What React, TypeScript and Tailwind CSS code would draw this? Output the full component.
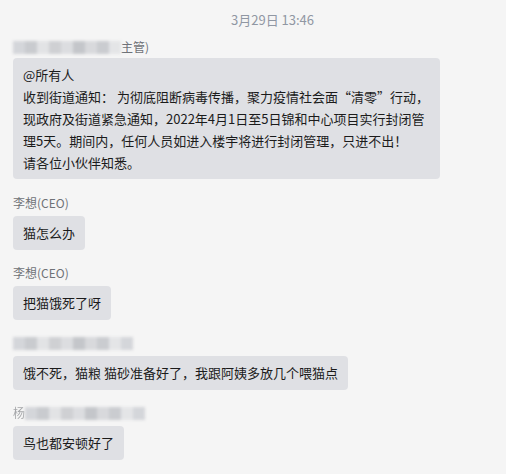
const font = { fontFamily: '"Noto Sans CJK SC", "Noto Sans", sans-serif' };

const shades = ["#d4d6da", "#c9cbcf", "#e2e3e5", "#cfd0d3", "#dcdde0", "#c4c6ca", "#d8d9dc", "#caccd0", "#e4e5e7"];

function Blurred({ width, lead, tail }: { width: number; lead?: string; tail?: string }) {
  const n = Math.round(width / 12);
  return (
    <div className="flex h-[18px] items-center text-[12px] leading-[18px] text-[#6f7277]">
      {lead && <span className="opacity-60 blur-[0.6px]">{lead}</span>}
      <div className="flex h-[13px] blur-[1.8px]">
        {Array.from({ length: n }).map((_, i) => (
          <div key={i} className="h-full w-[12px]" style={{ background: shades[i % shades.length] }} />
        ))}
      </div>
      {tail && <span>{tail}</span>}
    </div>
  );
}

function Name({ children }: { children: React.ReactNode }) {
  return <div className="h-[18px] text-[12px] leading-[18px] text-[#6f7277]">{children}</div>;
}

function Bubble({ children }: { children: React.ReactNode }) {
  return (
    <div className="mt-[4px] w-fit rounded-[4px] bg-[#dfe0e4] px-[10px] py-[6px] text-[13px] leading-[22px] text-[#1b1b1b]">
      {children}
    </div>
  );
}

export default function App() {
  return (
    <div className="h-[474px] w-[506px] overflow-hidden bg-[#f5f5f5] pl-[13px]" style={font}>
      <div className="flex justify-center pl-[26px] pt-[10px] text-[13px] leading-[20px] text-[#9097a3]">3月29日 13:46</div>
      <div className="mt-[8px]">
        <Blurred width={112} tail="主管)" />
      </div>
      <div className="mt-[2px] w-[427px] whitespace-nowrap rounded-[4px] bg-[#dfe0e4] px-[10px] py-[5.5px] text-[13px] leading-[22px] text-[#1b1b1b]">
        @所有人
        <br />
        收到街道通知： 为彻底阻断病毒传播，聚力疫情社会面“清零”行动，
        <br />
        现政府及街道紧急通知，2022年4月1日至5日锦和中心项目实行封闭管
        <br />
        理5天。期间内，任何人员如进入楼宇将进行封闭管理，只进不出！
        <br />
        请各位小伙伴知悉。
      </div>
      <div className="mt-[15px]">
        <Name>李想(CEO)</Name>
        <Bubble>猫怎么办</Bubble>
      </div>
      <div className="mt-[14px]">
        <Name>李想(CEO)</Name>
        <Bubble>把猫饿死了呀</Bubble>
      </div>
      <div className="mt-[14px]">
        <Blurred width={124} />
        <Bubble>饿不死，猫粮 猫砂准备好了，我跟阿姨多放几个喂猫点</Bubble>
      </div>
      <div className="mt-[14px]">
        <Blurred width={120} lead="杨" />
        <Bubble>鸟也都安顿好了</Bubble>
      </div>
    </div>
  );
}
